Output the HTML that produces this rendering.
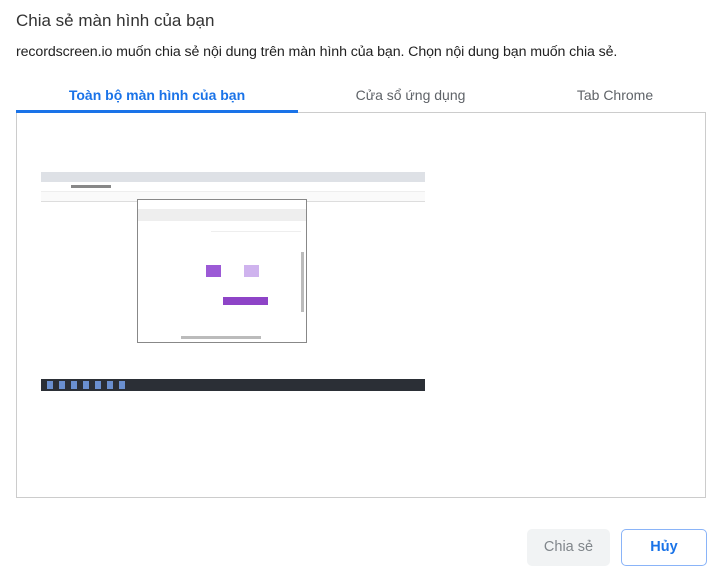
<!DOCTYPE html>
<html><head><meta charset="utf-8"><style>
body{margin:0;width:720px;height:567px;background:#fff;font-family:"Liberation Sans",sans-serif;position:relative;overflow:hidden;color:#202124}
.a{position:absolute}
</style></head><body>
<div class="a" style="left:16px;top:11px;font-size:17px;color:#333">Chia sẻ màn hình của bạn</div>
<div class="a" style="left:16px;top:44px;font-size:14.2px;color:#222;letter-spacing:-0.1px">recordscreen.io muốn chia sẻ nội dung trên màn hình của bạn. Chọn nội dung bạn muốn chia sẻ.</div>
<div class="a" style="left:16px;top:87px;width:282px;text-align:center;font-size:14px;font-weight:bold;color:#1a73e8">Toàn bộ màn hình của bạn</div>
<div class="a" style="left:298px;top:87px;width:225px;text-align:center;font-size:14px;color:#5f6368">Cửa sổ ứng dụng</div>
<div class="a" style="left:523px;top:87px;width:184px;text-align:center;font-size:14px;color:#5f6368">Tab Chrome</div>
<div class="a" style="left:16px;top:112px;width:690px;height:386px;border:1px solid #ccc;box-sizing:border-box"></div>
<div class="a" style="left:16px;top:110px;width:282px;height:3px;background:#1a73e8"></div>
<div class="a" style="left:41px;top:172px;width:384px;height:219px;background:#fff">
 <div class="a" style="left:0;top:0;width:384px;height:10px;background:#dee1e6"></div>
 <div class="a" style="left:0;top:10px;width:384px;height:9px;background:#fff;border-bottom:1px solid #eee"></div>
 <div class="a" style="left:30px;top:13px;width:40px;height:3px;background:#888"></div>
 <div class="a" style="left:0;top:20px;width:384px;height:9px;background:#fafafa;border-bottom:1px solid #ddd"></div>
 <div class="a" style="left:96px;top:27px;width:170px;height:144px;background:#fff;border:1px solid #888;box-sizing:border-box"></div>
 <div class="a" style="left:97px;top:37px;width:168px;height:12px;background:#eee"></div>
 <div class="a" style="left:170px;top:59px;width:90px;height:1px;background:#eee"></div>
 <div class="a" style="left:165px;top:93px;width:15px;height:12px;background:#9c5ad6"></div>
 <div class="a" style="left:203px;top:93px;width:15px;height:12px;background:#cfb3ee"></div>
 <div class="a" style="left:182px;top:125px;width:45px;height:8px;background:#8e44c7"></div>
 <div class="a" style="left:260px;top:80px;width:3px;height:60px;background:#bbb"></div>
 <div class="a" style="left:140px;top:164px;width:80px;height:3px;background:#bbb"></div>
 <div class="a" style="left:0;top:207px;width:384px;height:12px;background:#2b2f36"></div>
 <div class="a" style="left:6px;top:209px;width:80px;height:8px;background:repeating-linear-gradient(90deg,#6a8fcf 0 6px,transparent 6px 12px)"></div>
</div>
<div class="a" style="left:527px;top:529px;width:83px;height:37px;background:#f1f3f4;border-radius:5px;font-size:14.5px;color:#80868b;text-align:center;line-height:37px">Chia sẻ</div>
<div class="a" style="left:621px;top:529px;width:86px;height:37px;border:1px solid #8ab4f8;border-radius:5px;box-sizing:border-box;font-size:14.5px;font-weight:bold;color:#1a73e8;text-align:center;line-height:35px">Hủy</div>
</body></html>
